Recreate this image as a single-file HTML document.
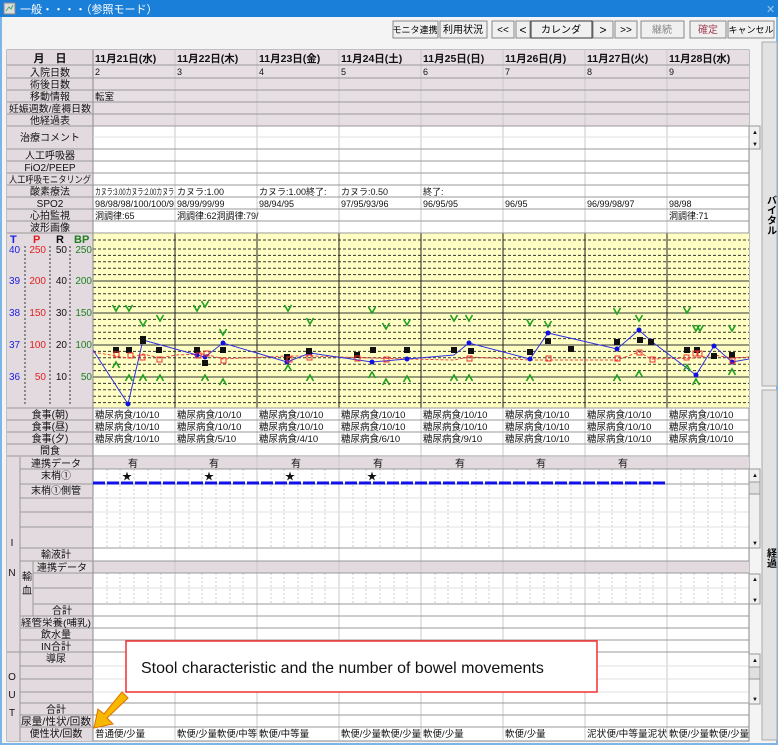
<!DOCTYPE html>
<html><head><meta charset="utf-8"><style>
body{margin:0;width:778px;height:745px;overflow:hidden;background:#fff;}
svg{display:block;font-family:"Liberation Sans","Noto Sans CJK JP",sans-serif;}
</style></head><body>
<svg width="778" height="745" viewBox="0 0 778 745" xmlns="http://www.w3.org/2000/svg">
<defs>
<clipPath id="cells"><rect x="93" y="50" width="656" height="695"/></clipPath>
<path id="vv" d="M-3.5 -3 L0 3 L3.5 -3" fill="none" stroke="#20a020" stroke-width="1.6"/>
<path id="aa" d="M-3.5 3 L0 -3 L3.5 3" fill="none" stroke="#20a020" stroke-width="1.6"/>
</defs>
<rect x="0" y="0" width="778" height="745" fill="#f4f4f4"/>
<rect x="0" y="0" width="778" height="17" fill="#1a7fd8"/>
<rect x="0" y="17" width="2" height="728" fill="#7fb4e6"/>
<rect x="776" y="17" width="2" height="728" fill="#7fb4e6"/>
<rect x="0" y="743" width="778" height="2" fill="#7fb4e6"/>
<rect x="4" y="3" width="11" height="11" fill="#ddd" stroke="#888"/>
<path d="M6 11 L9 7 L11 9 L13 5" stroke="#4a7" fill="none"/>
<text x="20" y="13" font-size="11" fill="#fff">一般・・・・（参照モード）</text>
<text x="766" y="13" font-size="11" fill="#9cc6ee">✕</text>

<g font-size="10" text-anchor="middle">
<g fill="#f0f0f0" stroke="#888">
<rect x="393" y="21" width="45" height="17"/><rect x="440" y="21" width="47" height="17"/>
<rect x="492" y="21" width="22" height="17"/><rect x="516" y="21" width="14" height="17"/>
<rect x="531" y="21" width="61" height="17" stroke="#333"/><rect x="593" y="21" width="20" height="17"/>
<rect x="615" y="21" width="22" height="17"/><rect x="641" y="21" width="43" height="17"/>
<rect x="690" y="21" width="36" height="17"/><rect x="728" y="21" width="46" height="17"/>
</g>
<text x="415" y="33" font-size="9">モニタ連携</text><text x="463" y="33">利用状況</text>
<text x="503" y="33">&lt;&lt;</text><text x="523" y="34" font-size="12">&lt;</text>
<text x="561" y="33">カレンダ</text><text x="603" y="34" font-size="12">&gt;</text>
<text x="626" y="33">&gt;&gt;</text><text x="662" y="33" fill="#888">継続</text>
<text x="708" y="33" fill="#a04050">確定</text><text x="751" y="33" font-size="9">キャンセル</text>
</g>

<rect x="762" y="42" width="15" height="344" fill="#e2e2e2" stroke="#aaa"/>
<rect x="762" y="390" width="15" height="350" fill="#e2e2e2" stroke="#aaa"/>
<text x="770" y="195" font-size="10" font-weight="bold" writing-mode="tb">バイタル</text>
<text x="770" y="548" font-size="10" font-weight="bold" writing-mode="tb">経過</text>

<rect x="7" y="50" width="742" height="691" fill="#fff" stroke="#888"/>
<rect x="7" y="50" width="86" height="691" fill="#e2dadf"/>
<rect x="93" y="50" width="656" height="76" fill="#e6dee3"/>
<rect x="93" y="233" width="656" height="175" fill="#ffffc4"/>
<rect x="93" y="457" width="656" height="12" fill="#e2dadf"/>
<rect x="93" y="561" width="656" height="12" fill="#e2dadf"/>

<g stroke="#333" stroke-width="1" stroke-dasharray="3,2">
<line x1="93" x2="749" y1="240" y2="240"/><line x1="93" x2="749" y1="249" y2="249"/>
<line x1="93" x2="749" y1="255.4" y2="255.4"/><line x1="93" x2="749" y1="261.8" y2="261.8"/><line x1="93" x2="749" y1="268.2" y2="268.2"/><line x1="93" x2="749" y1="274.6" y2="274.6"/>
<line x1="93" x2="749" y1="287.4" y2="287.4"/><line x1="93" x2="749" y1="293.8" y2="293.8"/><line x1="93" x2="749" y1="300.2" y2="300.2"/><line x1="93" x2="749" y1="306.6" y2="306.6"/>
<line x1="93" x2="749" y1="319.4" y2="319.4"/><line x1="93" x2="749" y1="325.8" y2="325.8"/><line x1="93" x2="749" y1="332.2" y2="332.2"/><line x1="93" x2="749" y1="338.6" y2="338.6"/>
<line x1="93" x2="749" y1="351.4" y2="351.4"/><line x1="93" x2="749" y1="357.8" y2="357.8"/><line x1="93" x2="749" y1="364.2" y2="364.2"/><line x1="93" x2="749" y1="370.6" y2="370.6"/>
<line x1="93" x2="749" y1="383.4" y2="383.4"/><line x1="93" x2="749" y1="389.8" y2="389.8"/><line x1="93" x2="749" y1="396.2" y2="396.2"/><line x1="93" x2="749" y1="402.6" y2="402.6"/>
</g>
<g stroke="#333" stroke-width="1">
<line x1="93" x2="749" y1="281" y2="281"/><line x1="93" x2="749" y1="313" y2="313"/>
<line x1="93" x2="749" y1="345" y2="345"/><line x1="93" x2="749" y1="377" y2="377"/>
</g>

<g stroke="#ccc" stroke-dasharray="2,2">
<path d="M107 469V548M120 469V548M134 469V548M148 469V548M161 469V548 M189 469V548M202 469V548M216 469V548M230 469V548M243 469V548 M271 469V548M284 469V548M298 469V548M312 469V548M325 469V548 M353 469V548M366 469V548M380 469V548M394 469V548M407 469V548 M435 469V548M448 469V548M462 469V548M476 469V548M489 469V548 M517 469V548M530 469V548M544 469V548M558 469V548M571 469V548 M599 469V548M612 469V548M626 469V548M640 469V548M653 469V548 M681 469V548M694 469V548M708 469V548M722 469V548M735 469V548"/>
<path d="M107 573V604M120 573V604M134 573V604M148 573V604M161 573V604 M189 573V604M202 573V604M216 573V604M230 573V604M243 573V604 M271 573V604M284 573V604M298 573V604M312 573V604M325 573V604 M353 573V604M366 573V604M380 573V604M394 573V604M407 573V604 M435 573V604M448 573V604M462 573V604M476 573V604M489 573V604 M517 573V604M530 573V604M544 573V604M558 573V604M571 573V604 M599 573V604M612 573V604M626 573V604M640 573V604M653 573V604 M681 573V604M694 573V604M708 573V604M722 573V604M735 573V604"/>
</g>

<g stroke="#c8c8c8">
<path d="M175 50V741M257 50V741M339 50V741M421 50V741M503 50V741M585 50V741M667 50V741"/>
</g>
<g stroke="#222"><path d="M175 233V408M257 233V408M339 233V408M421 233V408M503 233V408M585 233V408M667 233V408"/></g>
<line x1="93" y1="50" x2="93" y2="741" stroke="#888"/>

<g stroke="#999">
<path d="M7 65H749M7 78H749M7 90H749M7 102H749M7 114H749M7 126H749M7 149H749M7 161H749M7 173H749M7 185H749M7 197H749M7 209H749M7 221H749M7 233H749M7 408H749M7 420H749M7 432H749M7 444H749M7 456H749"/>
<path d="M20 469H749M20 484H749M20 498H93M20 512H93M20 527H93M20 548H749M20 561H749M33 573H749M33 588H93M33 604H749M20 616H749M20 628H749M20 640H749M7 652H749M20 666H93M20 679H93M20 692H93M20 703H749M20 715H749M20 727H749"/>
<path d="M20 457V741M33 561V616"/>
</g>
<g stroke="#e0e0e0"><path d="M93 137H749M93 498H749M93 512H749M93 527H749M93 588H749M93 666H749M93 679H749M93 692H749"/></g>

<g font-size="10" text-anchor="middle" fill="#111">
<text x="50" y="62" font-size="11" font-weight="bold">月　日</text>
<text x="50" y="76">入院日数</text><text x="50" y="88">術後日数</text><text x="50" y="100">移動情報</text>
<text x="50" y="112" font-size="9.5" textLength="82" lengthAdjust="spacingAndGlyphs">妊娠週数/産褥日数</text><text x="50" y="124">他経過表</text>
<text x="50" y="141">治療コメント</text><text x="50" y="159">人工呼吸器</text><text x="50" y="171">FiO2/PEEP</text>
<text x="50" y="183" font-size="9.5" textLength="82" lengthAdjust="spacingAndGlyphs">人工呼吸モニタリング</text><text x="50" y="195">酸素療法</text><text x="50" y="207">SPO2</text>
<text x="50" y="219">心拍監視</text><text x="50" y="231">波形画像</text>
<text x="50" y="418">食事(朝)</text><text x="50" y="430">食事(昼)</text><text x="50" y="442">食事(夕)</text><text x="50" y="454">間食</text>
<text x="56" y="467">連携データ</text><text x="56" y="479">末梢①</text><text x="56" y="494">末梢①側管</text>
<text x="56" y="558">輸液計</text><text x="62" y="571">連携データ</text><text x="62" y="614">合計</text>
<text x="56" y="626" font-size="9.5" textLength="70" lengthAdjust="spacingAndGlyphs">経管栄養(哺乳)</text><text x="56" y="638">飲水量</text><text x="56" y="650">IN合計</text>
<text x="56" y="662">導尿</text><text x="56" y="713">合計</text><text x="56" y="725" textLength="70" lengthAdjust="spacingAndGlyphs">尿量/性状/回数</text><text x="56" y="737">便性状/回数</text>
<text x="12" y="546">I</text><text x="12" y="576">N</text><text x="27" y="580">輸</text><text x="27" y="594">血</text>
<text x="12" y="680">O</text><text x="12" y="698">U</text><text x="12" y="716">T</text>
</g>
<g font-size="10">
<text x="10" y="243" fill="#2020e0" font-size="11" font-weight="bold">T</text>
<text x="33" y="243" fill="#e02020" font-size="11" font-weight="bold">P</text>
<text x="56" y="243" fill="#111" font-size="11" font-weight="bold">R</text>
<text x="74" y="243" fill="#208020" font-size="11" font-weight="bold">BP</text>
<g fill="#2020e0"><text x="9" y="253">40</text><text x="9" y="284">39</text><text x="9" y="316">38</text><text x="9" y="348">37</text><text x="9" y="380">36</text></g>
<g fill="#e02020" text-anchor="end"><text x="46" y="253">250</text><text x="46" y="284">200</text><text x="46" y="316">150</text><text x="46" y="348">100</text><text x="46" y="380">50</text></g>
<g fill="#111" text-anchor="end"><text x="67" y="253">50</text><text x="67" y="284">40</text><text x="67" y="316">30</text><text x="67" y="348">20</text><text x="67" y="380">10</text></g>
<g fill="#208020" text-anchor="end"><text x="92" y="253">250</text><text x="92" y="284">200</text><text x="92" y="316">150</text><text x="92" y="348">100</text><text x="92" y="380">50</text></g>
</g>
<g stroke="#333" stroke-dasharray="2,2"><path d="M25 246V406M50 246V406M70 246V406"/></g>

<g clip-path="url(#cells)" font-size="9.5" fill="#111">
<g font-size="10.5" font-weight="bold"><text x="95" y="62">11月21日(水)</text><text x="177" y="62">11月22日(木)</text><text x="259" y="62">11月23日(金)</text><text x="341" y="62">11月24日(土)</text><text x="423" y="62">11月25日(日)</text><text x="505" y="62">11月26日(月)</text><text x="587" y="62">11月27日(火)</text><text x="669" y="62">11月28日(水)</text></g>
<g font-size="9"><text x="95" y="75">2</text><text x="177" y="75">3</text><text x="259" y="75">4</text><text x="341" y="75">5</text><text x="423" y="75">6</text><text x="505" y="75">7</text><text x="587" y="75">8</text><text x="669" y="75">9</text></g>
<text x="95" y="100">転室</text>
<g font-size="9"><text x="95" y="195" textLength="79" lengthAdjust="spacingAndGlyphs">カヌラ:3.00カヌラ:2.00カヌラ</text><text x="177" y="195">カヌラ:1.00</text><text x="259" y="195">カヌラ:1.00終了:</text><text x="341" y="195">カヌラ:0.50</text><text x="423" y="195">終了:</text>
<text x="95" y="207" textLength="79" lengthAdjust="spacingAndGlyphs">98/98/98/100/100/9</text><text x="177" y="207">98/99/99/99</text><text x="259" y="207">98/94/95</text><text x="341" y="207">97/95/93/96</text><text x="423" y="207">96/95/95</text><text x="505" y="207">96/95</text><text x="587" y="207">96/99/98/97</text><text x="669" y="207">98/98</text>
<text x="95" y="219">洞調律:65</text><text x="177" y="219">洞調律:62洞調律:79/</text><text x="669" y="219">洞調律:71</text></g>
<g font-size="9.5">
<text x="95" y="418">糖尿病食/10/10</text><text x="177" y="418">糖尿病食/10/10</text><text x="259" y="418">糖尿病食/10/10</text><text x="341" y="418">糖尿病食/10/10</text><text x="423" y="418">糖尿病食/10/10</text><text x="505" y="418">糖尿病食/10/10</text><text x="587" y="418">糖尿病食/10/10</text><text x="669" y="418">糖尿病食/10/10</text>
<text x="95" y="430">糖尿病食/10/10</text><text x="177" y="430">糖尿病食/10/10</text><text x="259" y="430">糖尿病食/10/10</text><text x="341" y="430">糖尿病食/10/10</text><text x="423" y="430">糖尿病食/10/10</text><text x="505" y="430">糖尿病食/10/10</text><text x="587" y="430">糖尿病食/10/10</text><text x="669" y="430">糖尿病食/10/10</text>
<text x="95" y="442">糖尿病食/10/10</text><text x="177" y="442">糖尿病食/5/10</text><text x="259" y="442">糖尿病食/4/10</text><text x="341" y="442">糖尿病食/6/10</text><text x="423" y="442">糖尿病食/9/10</text><text x="505" y="442">糖尿病食/10/10</text><text x="587" y="442">糖尿病食/10/10</text><text x="669" y="442">糖尿病食/10/10</text>
</g>
<g text-anchor="middle" font-size="10"><text x="133" y="467">有</text><text x="214" y="467">有</text><text x="296" y="467">有</text><text x="378" y="467">有</text><text x="460" y="467">有</text><text x="541" y="467">有</text><text x="623" y="467">有</text>
<text x="127" y="480">★</text><text x="209" y="480">★</text><text x="290" y="480">★</text><text x="372" y="480">★</text></g>
<line x1="93" y1="483" x2="665" y2="483" stroke="#1010e8" stroke-width="3" stroke-dasharray="12,2"/>
<g font-size="9.5"><text x="95" y="737">普通便/少量</text><text x="177" y="737" textLength="80" lengthAdjust="spacingAndGlyphs">軟便/少量軟便/中等</text><text x="259" y="737">軟便/中等量</text><text x="341" y="737" textLength="80" lengthAdjust="spacingAndGlyphs">軟便/少量軟便/少量</text><text x="423" y="737">軟便/少量</text><text x="505" y="737">軟便/少量</text><text x="587" y="737" textLength="80" lengthAdjust="spacingAndGlyphs">泥状便/中等量泥状</text><text x="669" y="737" textLength="80" lengthAdjust="spacingAndGlyphs">軟便/少量軟便/少量</text></g>

<polyline points="93,352 128,358 143,354 160,358 176,355 205,354 223,359 287,356 310,356 372,358 407,359 454,360 469,357 530,360 548,360 617,360 639,352 651,359 696,358 714,355 732,358 749,357" fill="none" stroke="#f04040" stroke-dasharray="3,2"/>
<polyline points="93,350 128,404 143,340 197,355 205,357 223,343 287,362 310,353 372,362 407,359 454,355 469,343 530,359 548,333 617,349 639,330 651,341 696,375 714,346 732,362 749,359" fill="none" stroke="#3030e0"/>
<g fill="#1010e0"><circle cx="128" cy="404" r="2.5"/><circle cx="143" cy="340" r="2.5"/><circle cx="197" cy="355" r="2.5"/><circle cx="205" cy="357" r="2.5"/><circle cx="223" cy="343" r="2.5"/><circle cx="287" cy="362" r="2.5"/><circle cx="310" cy="353" r="2.5"/><circle cx="372" cy="362" r="2.5"/><circle cx="407" cy="359" r="2.5"/><circle cx="469" cy="343" r="2.5"/><circle cx="530" cy="359" r="2.5"/><circle cx="548" cy="333" r="2.5"/><circle cx="617" cy="349" r="2.5"/><circle cx="639" cy="330" r="2.5"/><circle cx="651" cy="341" r="2.5"/><circle cx="696" cy="375" r="2.5"/><circle cx="714" cy="346" r="2.5"/><circle cx="732" cy="362" r="2.5"/></g>
<g fill="#111"><rect x="113" y="347" width="6" height="6"/><rect x="126" y="347" width="6" height="6"/><rect x="140" y="336" width="6" height="8"/><rect x="156" y="347" width="6" height="6"/><rect x="194" y="347" width="6" height="6"/><rect x="202" y="360" width="6" height="6"/><rect x="220" y="347" width="6" height="6"/><rect x="284" y="354" width="6" height="6"/><rect x="306" y="348" width="6" height="6"/><rect x="354" y="352" width="6" height="6"/><rect x="370" y="347" width="6" height="6"/><rect x="404" y="347" width="6" height="6"/><rect x="451" y="347" width="6" height="6"/><rect x="468" y="348" width="6" height="6"/><rect x="527" y="349" width="6" height="6"/><rect x="545" y="338" width="6" height="6"/><rect x="568" y="346" width="6" height="6"/><rect x="614" y="339" width="6" height="6"/><rect x="637" y="337" width="6" height="6"/><rect x="648" y="339" width="6" height="6"/><rect x="684" y="347" width="6" height="6"/><rect x="694" y="347" width="6" height="6"/><rect x="711" y="353" width="6" height="6"/><rect x="729" y="352" width="6" height="6"/></g>
<g fill="none" stroke="#f03030"><rect x="114" y="352" width="5" height="5"/><rect x="128" y="353" width="5" height="5"/><rect x="140" y="355" width="5" height="5"/><rect x="157" y="357" width="5" height="5"/><rect x="196" y="353" width="5" height="5"/><rect x="204" y="351" width="5" height="5"/><rect x="221" y="358" width="5" height="5"/><rect x="287" y="357" width="5" height="5"/><rect x="307" y="355" width="5" height="5"/><rect x="355" y="356" width="5" height="5"/><rect x="384" y="357" width="5" height="5"/><rect x="467" y="356" width="5" height="5"/><rect x="546" y="356" width="5" height="5"/><rect x="615" y="356" width="5" height="5"/><rect x="637" y="350" width="5" height="5"/><rect x="650" y="357" width="5" height="5"/><rect x="684" y="355" width="5" height="5"/><rect x="693" y="351" width="5" height="5"/><rect x="697" y="351" width="5" height="5"/><rect x="730" y="358" width="5" height="5"/></g>
<g>
<use href="#vv" x="116" y="308"/><use href="#vv" x="129" y="308"/><use href="#vv" x="143" y="323"/><use href="#vv" x="160" y="318"/><use href="#vv" x="197" y="308"/><use href="#vv" x="205" y="304"/><use href="#vv" x="223" y="332"/><use href="#vv" x="288" y="308"/><use href="#vv" x="310" y="321"/><use href="#vv" x="372" y="310"/><use href="#vv" x="386" y="326"/><use href="#vv" x="407" y="322"/><use href="#vv" x="454" y="318"/><use href="#vv" x="469" y="318"/><use href="#vv" x="530" y="322"/><use href="#vv" x="548" y="324"/><use href="#vv" x="617" y="311"/><use href="#vv" x="639" y="318"/><use href="#vv" x="687" y="310"/><use href="#vv" x="696" y="328"/><use href="#vv" x="700" y="328"/><use href="#vv" x="732" y="328"/>
<use href="#aa" x="116" y="365"/><use href="#aa" x="129" y="378"/><use href="#aa" x="143" y="378"/><use href="#aa" x="160" y="378"/><use href="#aa" x="205" y="378"/><use href="#aa" x="223" y="382"/><use href="#aa" x="288" y="368"/><use href="#aa" x="310" y="378"/><use href="#aa" x="372" y="375"/><use href="#aa" x="386" y="382"/><use href="#aa" x="407" y="379"/><use href="#aa" x="454" y="378"/><use href="#aa" x="469" y="378"/><use href="#aa" x="530" y="378"/><use href="#aa" x="617" y="378"/><use href="#aa" x="639" y="374"/><use href="#aa" x="687" y="368"/><use href="#aa" x="696" y="382"/><use href="#aa" x="732" y="372"/>
</g>
</g>

<g fill="#f0f0f0" stroke="#999">
<rect x="749" y="126" width="11" height="23"/>
<rect x="749" y="469" width="11" height="79"/><rect x="749" y="482" width="11" height="12" fill="#e0e0e0"/>
<rect x="749" y="574" width="11" height="30"/>
<rect x="749" y="654" width="11" height="50"/><rect x="749" y="667" width="11" height="12" fill="#e0e0e0"/>
</g>
<g font-size="6" text-anchor="middle" fill="#111"><text x="755" y="134">▲</text><text x="755" y="146">▼</text><text x="755" y="477">▲</text><text x="755" y="545">▼</text><text x="755" y="581">▲</text><text x="755" y="602">▼</text><text x="755" y="662">▲</text><text x="755" y="701">▼</text></g>

<rect x="126" y="641" width="471" height="51" fill="#fff" stroke="#f03030" stroke-width="1.5"/>
<text x="141" y="673" font-size="16" fill="#111">Stool characteristic and the number of bowel movements</text>
<path d="M122 692 L128 698 L107 718 L113 724 L94 728 L98 709 L104 714 Z" fill="#f8b800" stroke="#e07000" stroke-width="1"/>
</svg>
</body></html>
